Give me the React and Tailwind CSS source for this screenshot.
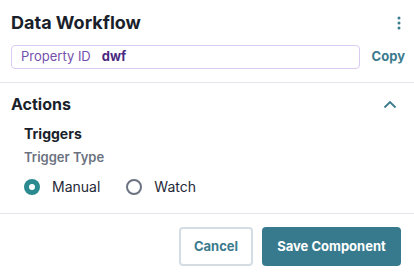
import React, { useState } from "react";

const font = { fontFamily: "Inter, 'Noto Sans', sans-serif" };

const Radio = ({ checked, label, onClick }) => (
  <button type="button" onClick={onClick} className="flex items-center gap-3 cursor-pointer">
    {checked ? (
      <span className="w-4 h-4 rounded-full bg-[#2b8a8f] flex items-center justify-center">
        <span className="w-[6px] h-[6px] rounded-full bg-white" />
      </span>
    ) : (
      <span className="w-4 h-4 rounded-full border-2 border-[#6b7280]" />
    )}
    <span className="text-[14px] text-[#1f2937]">{label}</span>
  </button>
);

export default function App() {
  const [trigger, setTrigger] = useState("manual");

  return (
    <div className="w-[414px] h-[272px] bg-white overflow-hidden" style={font}>
      <div className="pl-[11px] pr-[9px] pt-[11px]">
        <div className="flex items-center justify-between">
          <h1 className="text-[18px] font-bold text-[#1a1f2b] leading-[24px]">Data Workflow</h1>
          <svg width="4" height="14" viewBox="0 0 4 14" className="mr-[4px]">
            <circle cx="2" cy="2" r="1.5" fill="#3b7b8e" />
            <circle cx="2" cy="7" r="1.5" fill="#3b7b8e" />
            <circle cx="2" cy="12" r="1.5" fill="#3b7b8e" />
          </svg>
        </div>
        <div className="flex items-center mt-[10px] pb-[13px]">
          <div className="flex-1 h-[24px] border border-[#dccbf0] rounded-[4px] flex items-center px-[9px] text-[13px]">
            <span className="text-[#7450ad]">Property ID</span>
            <span className="ml-[11px] font-bold text-[#4a2a80]">dwf</span>
          </div>
          <span className="ml-[12px] text-[13px] font-bold text-[#3b7b8e]">Copy</span>
        </div>
      </div>
      <div className="border-t border-[#e2e5e9]" />
      <div className="px-[11px] pt-[10px]">
        <div className="flex items-center justify-between">
          <h2 className="text-[16px] font-bold text-[#1a1f2b] leading-[22px]">Actions</h2>
          <svg width="14" height="9" viewBox="0 0 14 9" className="mr-[6px]">
            <path d="M1.5 7.5 L7 2 L12.5 7.5" fill="none" stroke="#3b7b8e" strokeWidth="1.8" />
          </svg>
        </div>
        <div className="pl-[13px] pt-[9px]">
          <div className="text-[14px] font-bold text-[#1a1f2b] leading-[20px]">Triggers</div>
          <div className="text-[13px] font-semibold text-[#6b7280] leading-[18px] mt-[4px]">Trigger Type</div>
          <div className="flex items-center gap-[26px] mt-[10px] pb-[16px]">
            <Radio checked={trigger === "manual"} label="Manual" onClick={() => setTrigger("manual")} />
            <Radio checked={trigger === "watch"} label="Watch" onClick={() => setTrigger("watch")} />
          </div>
        </div>
      </div>
      <div className="border-t border-[#e2e5e9]" />
      <div className="flex justify-end gap-[9px] pr-[13px] pt-[13px]">
        <button className="w-[74px] h-[39px] border-2 border-[#d5dde3] rounded-[4px] text-[13px] font-bold text-[#3b7b8e]">
          Cancel
        </button>
        <button className="w-[139px] h-[39px] rounded-[4px] bg-[#387a8d] text-[13px] font-bold text-white">
          Save Component
        </button>
      </div>
    </div>
  );
}
